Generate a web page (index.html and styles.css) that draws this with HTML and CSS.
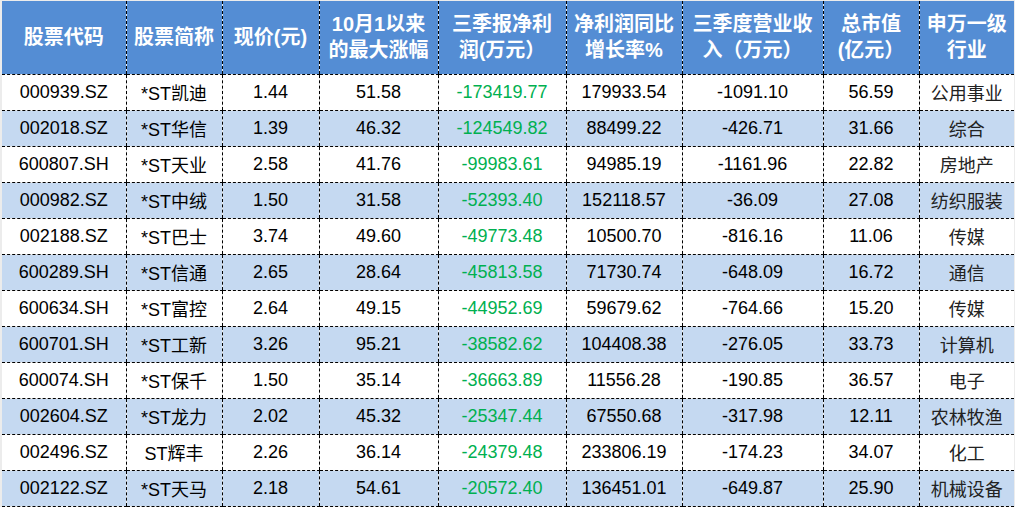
FILE: index.html
```html
<!DOCTYPE html>
<html lang="zh-CN">
<head>
<meta charset="utf-8">
<title>ST股票</title>
<link rel="stylesheet" href="styles.css">
</head>
<body>
<table class="grid">
<colgroup>
<col class="c1"><col class="c2"><col class="c3"><col class="c4"><col class="c5"><col class="c6"><col class="c7"><col class="c8"><col class="c9">
</colgroup>
<thead>
<tr class="head">
<th>股票代码</th>
<th>股票简称</th>
<th>现价(元)</th>
<th>10月1以来<br>的最大涨幅</th>
<th>三季报净利<br>润(万元）</th>
<th>净利润同比<br>增长率%</th>
<th>三季度营业收<br>入（万元）</th>
<th>总市值<br>(亿元）</th>
<th>申万一级<br>行业</th>
</tr>
</thead>
<tbody>
<tr><td>000939.SZ</td><td>*ST凯迪</td><td>1.44</td><td>51.58</td><td class="neg">-173419.77</td><td>179933.54</td><td>-1091.10</td><td>56.59</td><td class="cn">公用事业</td></tr>
<tr class="alt"><td>002018.SZ</td><td>*ST华信</td><td>1.39</td><td>46.32</td><td class="neg">-124549.82</td><td>88499.22</td><td>-426.71</td><td>31.66</td><td class="cn">综合</td></tr>
<tr><td>600807.SH</td><td>*ST天业</td><td>2.58</td><td>41.76</td><td class="neg">-99983.61</td><td>94985.19</td><td>-1161.96</td><td>22.82</td><td class="cn">房地产</td></tr>
<tr class="alt"><td>000982.SZ</td><td>*ST中绒</td><td>1.50</td><td>31.58</td><td class="neg">-52393.40</td><td>152118.57</td><td>-36.09</td><td>27.08</td><td class="cn">纺织服装</td></tr>
<tr><td>002188.SZ</td><td>*ST巴士</td><td>3.74</td><td>49.60</td><td class="neg">-49773.48</td><td>10500.70</td><td>-816.16</td><td>11.06</td><td class="cn">传媒</td></tr>
<tr class="alt"><td>600289.SH</td><td>*ST信通</td><td>2.65</td><td>28.64</td><td class="neg">-45813.58</td><td>71730.74</td><td>-648.09</td><td>16.72</td><td class="cn">通信</td></tr>
<tr><td>600634.SH</td><td>*ST富控</td><td>2.64</td><td>49.15</td><td class="neg">-44952.69</td><td>59679.62</td><td>-764.66</td><td>15.20</td><td class="cn">传媒</td></tr>
<tr class="alt"><td>600701.SH</td><td>*ST工新</td><td>3.26</td><td>95.21</td><td class="neg">-38582.62</td><td>104408.38</td><td>-276.05</td><td>33.73</td><td class="cn">计算机</td></tr>
<tr><td>600074.SH</td><td>*ST保千</td><td>1.50</td><td>35.14</td><td class="neg">-36663.89</td><td>11556.28</td><td>-190.85</td><td>36.57</td><td class="cn">电子</td></tr>
<tr class="alt"><td>002604.SZ</td><td>*ST龙力</td><td>2.02</td><td>45.32</td><td class="neg">-25347.44</td><td>67550.68</td><td>-317.98</td><td>12.11</td><td class="cn">农林牧渔</td></tr>
<tr><td>002496.SZ</td><td>ST辉丰</td><td>2.26</td><td>36.14</td><td class="neg">-24379.48</td><td>233806.19</td><td>-174.23</td><td>34.07</td><td class="cn">化工</td></tr>
<tr class="alt"><td>002122.SZ</td><td>*ST天马</td><td>2.18</td><td>54.61</td><td class="neg">-20572.40</td><td>136451.01</td><td>-649.87</td><td>25.90</td><td class="cn">机械设备</td></tr>
</tbody>
</table>
</body>
</html>
```
FILE: styles.css
```css
html, body {
  margin: 0;
  padding: 0;
  background: #ececec;
}
body {
  padding: 1px 1px 0 2px;
}
.grid {
  border-collapse: collapse;
  table-layout: fixed;
  width: 1012px;
  font-family: "Liberation Sans", "Noto Sans CJK SC", sans-serif;
  font-size: 18px;
  color: #000;
}
.c1 { width: 124px; }
.c2 { width: 96px; }
.c3 { width: 97px; }
.c4 { width: 119px; }
.c5 { width: 128px; }
.c6 { width: 116px; }
.c7 { width: 141px; }
.c8 { width: 96px; }
.c9 { width: 95px; }
.grid th, .grid td {
  padding: 0;
  text-align: center;
  vertical-align: middle;
  border-left: 1px dashed #000;
  border-bottom: 1px dashed #000;
  white-space: nowrap;
  overflow: hidden;
}
.grid th:first-child, .grid td:first-child {
  border-left: none;
}
.head {
  height: 73px;
  background: #548dd4;
}
.head th {
  color: #fff;
  font-family: "Liberation Sans", "Noto Sans CJK SC", sans-serif;
  font-weight: bold;
  font-size: 20px;
  line-height: 26px;
}
.grid tbody tr {
  height: 36px;
  background: #fff;
}
.grid tbody tr.alt {
  background: #c5d9f1;
}
.neg {
  color: #00b050;
}
.cn {
  color: #222;
}
```
